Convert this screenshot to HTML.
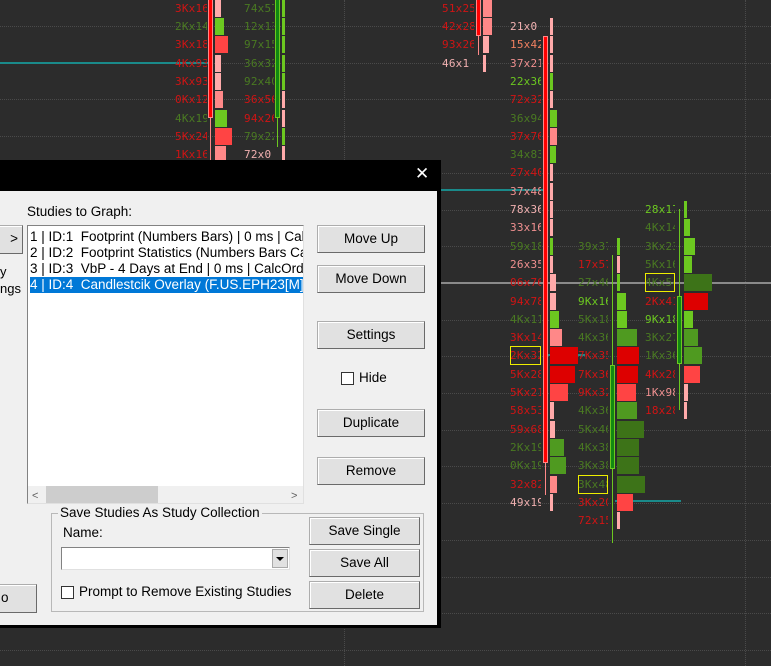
<!DOCTYPE html>
<html><head><meta charset="utf-8"><style>
*{margin:0;padding:0;box-sizing:border-box}
body{width:771px;height:666px;overflow:hidden;background:#2c2c2c;position:relative;font-family:"Liberation Sans",sans-serif}
.a{position:absolute}
.t{position:absolute;font-family:"DejaVu Sans Mono","Liberation Mono",monospace;font-size:11px;line-height:17px;height:17px;text-align:left;overflow:hidden;white-space:nowrap;letter-spacing:0.2px}
.hl{position:absolute;height:0;border-top:1px dotted #4a4a4a}
.d{position:absolute;font-size:13px;color:#000}
.btn{position:absolute;background:#e1e1e1;border:1px solid #adadad;border-right-color:#6a6a6a;border-bottom-color:#6a6a6a;box-shadow:inset 1px 1px 0 #fff;font-size:13.5px;text-align:center;color:#000}
.cb{position:absolute;width:13px;height:13px;background:#fff;border:1px solid #333}
</style></head><body>
<div id="c"></div>
<div class="a" style="left:0;top:160px;width:441px;height:468px;background:#000"></div>
<div class="a" style="left:0;top:191px;width:437px;height:434px;background:#f0f0f0"></div>
<div class="a" style="left:415px;top:164px;color:#fff;font-size:17px">✕</div>
<div class="btn" style="left:-10px;top:225px;width:33px;height:29px;line-height:26px;text-align:right;padding-right:4px">&gt;</div>
<div class="d" style="left:0;top:264px">y</div>
<div class="d" style="left:0;top:281px">ngs</div>
<div class="btn" style="left:-10px;top:584px;width:47px;height:29px;line-height:26px;text-align:left;padding-left:10px">o</div>
<div class="d" style="left:27px;top:204px;font-size:13.5px">Studies to Graph:</div>
<div class="a" style="left:27px;top:225px;width:277px;height:279px;background:#fff;border:1px solid #828282;border-right-color:#e0e0e0;border-bottom-color:#e0e0e0;overflow:hidden">
<div style="position:absolute;left:2px;top:3px;font-size:13.5px;line-height:16px;white-space:nowrap;width:300px">
<div>1 | ID:1&nbsp; Footprint (Numbers Bars) | 0 ms | CalcOrder</div>
<div>2 | ID:2&nbsp; Footprint Statistics (Numbers Bars Calc</div>
<div>3 | ID:3&nbsp; VbP - 4 Days at End | 0 ms | CalcOrder</div>
<div style="background:#0078d7;color:#fff;width:273px">4 | ID:4&nbsp; Candlestcik Overlay (F.US.EPH23[M]</div>
</div>
<div style="position:absolute;left:0;bottom:0;width:275px;height:17px;background:#f0f0f0"></div>
<div style="position:absolute;left:18px;bottom:0;width:112px;height:17px;background:#cdcdcd"></div>
<div style="position:absolute;left:4px;bottom:1px;font-size:11px;color:#606060">&lt;</div>
<div style="position:absolute;left:263px;bottom:1px;font-size:11px;color:#606060">&gt;</div>
</div>
<div class="btn" style="left:317px;top:225px;width:108px;height:28px;line-height:26px">Move Up</div>
<div class="btn" style="left:317px;top:265px;width:108px;height:28px;line-height:26px">Move Down</div>
<div class="btn" style="left:317px;top:321px;width:108px;height:28px;line-height:26px">Settings</div>
<div class="cb" style="left:341px;top:372px"></div>
<div class="d" style="left:359px;top:370px;font-size:13.5px">Hide</div>
<div class="btn" style="left:317px;top:409px;width:108px;height:28px;line-height:26px">Duplicate</div>
<div class="btn" style="left:317px;top:457px;width:108px;height:28px;line-height:26px">Remove</div>
<div class="a" style="left:51px;top:513px;width:373px;height:99px;border:1px solid #b8b8b8"></div>
<div class="d" style="left:58px;top:505px;background:#f0f0f0;padding:0 2px;font-size:13.5px">Save Studies As Study Collection</div>
<div class="d" style="left:63px;top:525px;font-size:13.5px">Name:</div>
<div class="a" style="left:61px;top:547px;width:229px;height:23px;background:#fff;border:1px solid #828282;border-right-color:#e0e0e0;border-bottom-color:#e0e0e0"></div>
<div class="a" style="left:272px;top:549px;width:16px;height:19px;background:#e1e1e1;border:1px solid #aaa"><div style="position:absolute;left:3px;top:7px;border:4px solid transparent;border-top:4px solid #000;border-bottom:0"></div></div>
<div class="cb" style="left:61px;top:586px"></div>
<div class="d" style="left:79px;top:584px;font-size:13.5px">Prompt to Remove Existing Studies</div>
<div class="btn" style="left:309px;top:517px;width:111px;height:28px;line-height:26px">Save Single</div>
<div class="btn" style="left:309px;top:549px;width:111px;height:28px;line-height:26px">Save All</div>
<div class="btn" style="left:309px;top:581px;width:111px;height:28px;line-height:26px">Delete</div>
<script>
var c=document.getElementById('c'),h='';
function A(s){h+=s}
for(var y=26;y<666;y+=36.7)A('<div class="hl" style="left:0;top:'+Math.round(y)+'px;width:771px"></div>');
A('<div class="a" style="left:344px;top:0;height:666px;border-left:1px dotted #4a4a4a"></div>');
A('<div class="a" style="left:745px;top:0;height:666px;border-left:1px dotted #4a4a4a"></div>');
A('<div class="a" style="left:0;top:62px;width:212px;height:2px;background:#1a8a8a"></div>');
A('<div class="a" style="left:440px;top:189px;width:105px;height:2px;background:#1a8a8a"></div>');
A('<div class="a" style="left:545px;top:354px;width:40px;height:2px;background:#1a8a8a"></div>');
A('<div class="a" style="left:615px;top:500px;width:66px;height:2px;background:#1a8a8a"></div>');
A('<div class="a" style="left:440px;top:282px;width:331px;height:2px;background:#8a8a8a"></div>');
var C={r:'#d01414',g:'#4a7a22',G:'#6cc820',p:'#f09090',o:'#f08060',w:'#f0b0b0'};
var B={p:'#f88',P:'#faa',g:'#6cc820',m:'#4f9a20',d:'#3d7318',R:'#d00',r:'#f44',l:'#f88'};
function col(tx,bx,n0,rows,tw){rows.forEach(function(r,i){var y=Math.round(7.7+18.3*(n0+i)-8);
A('<div class="t" style="left:'+(tx-tw)+'px;top:'+y+'px;width:'+tw+'px;color:'+C[r[1]]+'">'+r[0]+'</div>');
A('<div class="a" style="left:'+bx+'px;top:'+(y)+'px;width:'+r[3]+'px;height:17px;background:'+B[r[2]]+'"></div>');
if(r[4])A('<div class="a" style="left:'+(tx-tw)+'px;top:'+(y-1)+'px;width:'+tw+'px;height:19px;border:1px solid #ee0"></div>');});}
col(207,215,0,[['3Kx16','r','P',6],['2Kx14','g','g',9],['3Kx18','r','r',13],['4Kx93','r','P',6],['3Kx93','r','P',6],['0Kx12','r','p',8],['4Kx19','g','g',12],['5Kx24','r','r',17],['1Kx16','r','l',11]],32);
col(274,282,0,[['74x57','g','g',3],['12x13','g','g',3],['97x15','g','g',3],['36x32','g','g',3],['92x40','g','g',3],['36x56','r','P',3],['94x26','r','P',3],['79x22','g','g',3],['72x0','w','P',3]],30);
col(474,483,0,[['51x25','r','p',9],['42x28','r','p',9],['93x26','r','P',6],['46x1','w','P',3]],32);
col(541,550,1,[['21x0','w','P',3],['15x42','o','P',3],['37x21','p','P',3],['22x36','G','g',3],['72x32','r','P',3],['36x94','g','g',7],['37x76','r','l',7],['34x83','g','g',6],['27x40','r','P',3],['37x48','p','P',3],['78x36','w','P',3],['33x16','p','P',3],['59x18','g','g',3],['26x35','p','P',3],['06x76','r','P',6],['94x78','r','P',6],['4Kx11','g','g',9],['3Kx14','r','l',12],['2Kx32','r','R',28,1],['5Kx28','r','R',25],['5Kx21','r','r',18],['58x53','r','P',4],['59x68','r','P',5],['2Kx19','g','m',14],['0Kx19','g','m',16],['32x82','r','l',7],['49x19','w','P',3]],31);
col(608,617,13,[['39x37','g','g',3],['17x57','r','P',3],['27x46','g','g',3],['9Kx16','G','g',9],['5Kx18','g','g',10],['4Kx36','g','m',20],['7Kx35','r','R',22],['7Kx36','r','R',21],['9Kx32','r','r',19],['4Kx36','g','m',20],['5Kx46','g','d',27],['4Kx38','g','d',22],['3Kx38','g','d',22],['3Kx48','g','d',28,1],['3Kx20','r','r',16],['72x15','r','P',3]],30);
col(675,684,11,[['28x17','G','g',3],['4Kx14','g','g',6],['3Kx23','g','g',11],['5Kx16','g','g',8],['4Kx54','g','d',28,1],['2Kx41','r','R',24],['9Kx18','G','g',9],['3Kx27','g','m',14],['1Kx36','g','m',18],['4Kx28','r','r',16],['1Kx98','p','P',4],['18x28','r','P',3]],30);
function k(x,w,t,b,col,wx,wt,wb,wc){A('<div class="a" style="left:'+wx+'px;top:'+wt+'px;width:1px;height:'+(wb-wt)+'px;background:'+wc+'"></div>');
A('<div class="a" style="left:'+x+'px;top:'+t+'px;width:'+w+'px;height:'+(b-t)+'px;background:'+col+';border:1px solid '+wc+'"></div>');}
k(208,5,-2,118,'#f00',210,0,160,'#f88');
k(275,5,-2,118,'#118811',277,0,147,'#6cc820');
k(476,5,-2,36,'#f00',478,0,55,'#f88');
k(543,5,36,463,'#f00',545,36,495,'#f88');
k(610,5,365,469,'#118811',612,255,543,'#6cc820');
k(677,5,296,364,'#118811',679,209,410,'#6cc820');
c.innerHTML=h;
</script>
</body></html>
